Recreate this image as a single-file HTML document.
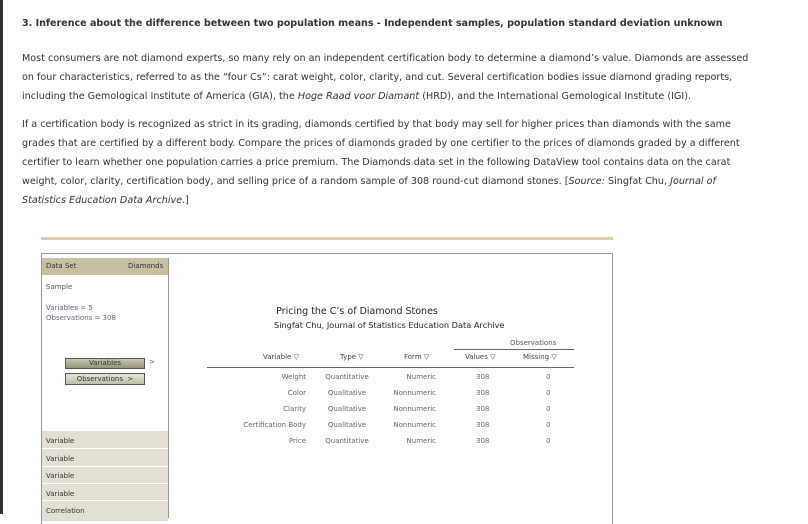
<!DOCTYPE html><html><head><style>
body{margin:0;width:808px;height:514px;overflow:hidden;background:#fff;font-family:"DejaVu Sans",Verdana,sans-serif;color:#333;position:relative}
.a{position:absolute;white-space:nowrap}
.t{font-size:9.6px;letter-spacing:0.01px}
.s{font-size:7px;color:#555}
.sm{font-size:7px;color:#666}
</style></head><body>
<div class="a" style="left:0;top:0;width:3px;height:514px;background:#333"></div>
<div class="a t" style="left:22px;top:18px;font-weight:bold;font-size:9.6px;letter-spacing:-0.03px">3. Inference about the difference between two population means - Independent samples, population standard deviation unknown</div>
<div class="a t" style="left:22px;top:49px;line-height:19px">Most consumers are not diamond experts, so many rely on an independent certification body to determine a diamond’s value. Diamonds are assessed<br>on four characteristics, referred to as the “four Cs”: carat weight, color, clarity, and cut. Several certification bodies issue diamond grading reports,<br>including the Gemological Institute of America (GIA), the <i>Hoge Raad voor Diamant</i> (HRD), and the International Gemological Institute (IGI).</div>
<div class="a t" style="left:22px;top:115px;line-height:19px">If a certification body is recognized as strict in its grading, diamonds certified by that body may sell for higher prices than diamonds with the same<br>grades that are certified by a different body. Compare the prices of diamonds graded by one certifier to the prices of diamonds graded by a different<br>certifier to learn whether one population carries a price premium. The Diamonds data set in the following DataView tool contains data on the carat<br>weight, color, clarity, certification body, and selling price of a random sample of 308 round-cut diamond stones. [<i>Source:</i> Singfat Chu, <i>Journal of<br>Statistics Education Data Archive</i>.]</div>
<div class="a" style="left:41px;top:237px;width:572px;height:3px;background:#dccfa6"></div>
<div class="a" style="left:41px;top:253px;width:570px;height:270px;border:1px solid #999;border-bottom:none"></div>
<div class="a" style="left:42px;top:258px;width:126px;height:260px;background:#fff;border-right:1px solid #999"></div>
<div class="a" style="left:42px;top:258px;width:126px;height:17px;background:#c8bf9f"></div>
<div class="a" style="left:46px;top:262px;font-size:7px;color:#333">Data Set</div>
<div class="a" style="left:128px;top:262px;font-size:7px;color:#333">Diamonds</div>
<div class="a s" style="left:46px;top:283px">Sample</div>
<div class="a s" style="left:46px;top:303px;line-height:10px;color:#667">Variables = 5<br>Observations = 308</div>
<div class="a" style="left:65px;top:358px;width:78px;height:9px;background:linear-gradient(#c8c6ae,#979477);border:1px solid #555;font-size:7px;text-align:center;line-height:9px;color:#333">Variables</div>
<div class="a s" style="left:149px;top:358px">&gt;</div>
<div class="a" style="left:65px;top:373px;width:78px;height:10px;background:linear-gradient(#e8e6d6,#c0bda6);border:1px solid #555;font-size:7px;text-align:center;line-height:10px;color:#333">Observations &nbsp;&gt;</div>
<div class="a" style="left:42px;top:431px;width:126px;height:90px;background:#e3dfd3"></div>
<div class="a" style="left:42px;top:448px;width:126px;height:1px;background:#fff"></div>
<div class="a" style="left:42px;top:466px;width:126px;height:1px;background:#fff"></div>
<div class="a" style="left:42px;top:483px;width:126px;height:1px;background:#fff"></div>
<div class="a" style="left:42px;top:500px;width:126px;height:1px;background:#fff"></div>
<div class="a" style="left:46px;top:433px;font-size:7px;line-height:17.5px;color:#333">Variable<br>Variable<br>Variable<br>Variable<br>Correlation</div>
<div class="a" style="left:207px;top:306px;width:300px;text-align:center;font-size:9.5px;color:#223">Pricing the C’s of Diamond Stones</div>
<div class="a" style="left:274px;top:320px;font-size:8.2px;color:#223">Singfat Chu, Journal of Statistics Education Data Archive</div>
<div class="a sm" style="left:510px;top:339px;color:#555">Observations</div>
<div class="a" style="left:454px;top:349px;width:120px;height:1px;background:#666"></div>
<div class="a" style="left:207px;top:367px;width:367px;height:1px;background:#666"></div>
<div class="a sm" style="left:263px;top:353px;color:#444">Variable ▽</div>
<div class="a sm" style="left:340px;top:353px;color:#444">Type ▽</div>
<div class="a sm" style="left:404px;top:353px;color:#444">Form ▽</div>
<div class="a sm" style="left:465px;top:353px;color:#444">Values ▽</div>
<div class="a sm" style="left:523px;top:353px;color:#444">Missing ▽</div>
<div class="a sm" style="left:226px;top:369px;width:80px;text-align:right;line-height:16px">Weight<br>Color<br>Clarity<br>Certification Body<br>Price</div>
<div class="a sm" style="left:320px;top:369px;width:54px;text-align:center;line-height:16px">Quantitative<br>Qualitative<br>Qualitative<br>Qualitative<br>Quantitative</div>
<div class="a sm" style="left:380px;top:369px;width:56px;text-align:right;line-height:16px">Numeric<br>Nonnumeric<br>Nonnumeric<br>Nonnumeric<br>Numeric</div>
<div class="a sm" style="left:476px;top:369px;line-height:16px">308<br>308<br>308<br>308<br>308</div>
<div class="a sm" style="left:546px;top:369px;line-height:16px">0<br>0<br>0<br>0<br>0</div>
</body></html>
